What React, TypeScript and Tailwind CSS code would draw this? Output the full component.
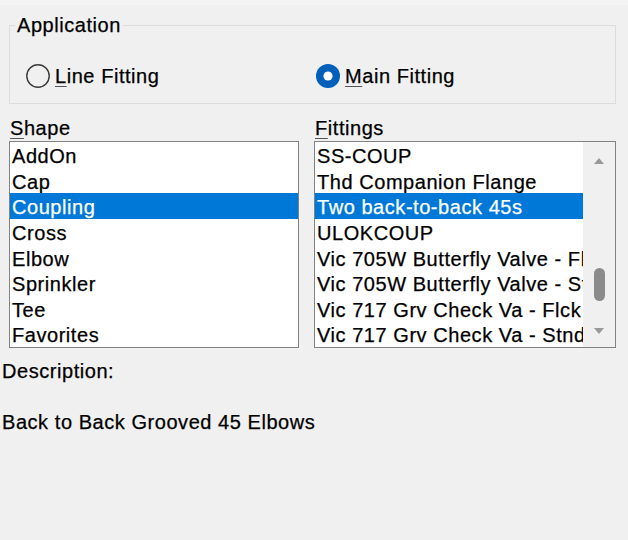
const shapes = ["AddOn", "Cap", "Coupling", "Cross", "Elbow", "Sprinkler", "Tee", "Favorites"];

const fittings = [
  "SS-COUP",
  "Thd Companion Flange",
  "Two back-to-back 45s",
  "ULOKCOUP",
  "Vic 705W Butterfly Valve - Flck",
  "Vic 705W Butterfly Valve - Stnd",
  "Vic 717 Grv Check Va - Flck",
  "Vic 717 Grv Check Va - Stnd",
];

function Radio({ checked }: { checked: boolean }) {
  return (
    <svg width="24" height="24" viewBox="0 0 24 24" className="shrink-0">
      {checked ? (
        <>
          <circle cx="12" cy="12" r="12" fill="#005fb8" />
          <circle cx="12" cy="12" r="4.6" fill="#ffffff" />
        </>
      ) : (
        <circle cx="12" cy="12" r="11.2" fill="none" stroke="#3a3a3a" strokeWidth="1.4" />
      )}
    </svg>
  );
}

function Mnemonic({ ch }: { ch: string }) {
  return <span className="underline decoration-[#555] decoration-[1px] underline-offset-[3px]">{ch}</span>;
}

function ListRow({ label, selected }: { label: string; selected: boolean }) {
  return (
    <div
      className={
        "h-[25.625px] overflow-hidden whitespace-nowrap px-[2px] pt-[2px] leading-[25.625px] " +
        (selected ? "bg-[#0078d7] text-white" : "text-black")
      }
    >
      {label}
    </div>
  );
}

function Scrollbar() {
  return (
    <div className="flex w-[32px] shrink-0 flex-col bg-[#f0f0f0]">
      <div className="flex h-[37px] items-center justify-center">
        <svg width="10" height="6" viewBox="0 0 10 6">
          <path d="M5 0 L10 6 L0 6 Z" fill="#999999" />
        </svg>
      </div>
      <div className="flex flex-1 justify-center">
        <div className="mt-[89px] h-[33px] w-[11px] rounded-full bg-[#8b8b8b]" />
      </div>
      <div className="flex h-[33px] items-center justify-center">
        <svg width="10" height="6" viewBox="0 0 10 6">
          <path d="M0 0 L10 0 L5 6 Z" fill="#999999" />
        </svg>
      </div>
    </div>
  );
}

export default function App() {
  return (
    <div className="h-[540px] w-[628px] overflow-hidden bg-[#f0f0f0] font-['Liberation_Sans',Arial,sans-serif] text-[20px] tracking-[0.55px] text-black [-webkit-text-stroke:0.25px_currentColor]">
      <div className="h-[5px] bg-[#f4f4f4]" />

      <fieldset className="ml-[9px] mt-[8px] h-[91px] w-[607px] border border-[#dcdcdc]">
        <legend className="ml-[5px] px-[2px] pt-[1px] leading-[23px]">Application</legend>
        <div className="mt-[27px] flex h-[24px] items-center pl-[16px]">
          <label className="flex w-[290px] items-center gap-[5px] leading-[24px]">
            <Radio checked={false} />
            <span>
              <Mnemonic ch="L" />
              ine Fitting
            </span>
          </label>
          <label className="flex items-center gap-[5px] leading-[24px]">
            <Radio checked />
            <span>
              <Mnemonic ch="M" />
              ain Fitting
            </span>
          </label>
        </div>
      </fieldset>

      <div className="mt-[13px] ml-[9px] flex gap-[15px]">
        <div className="w-[290px]">
          <div className="h-[23px] pl-[1px] leading-[23px]">
            <Mnemonic ch="S" />
            hape
          </div>
          <div className="mt-[1px] h-[207px] overflow-hidden border border-[#828282] bg-white">
            {shapes.map((s) => (
              <ListRow key={s} label={s} selected={s === "Coupling"} />
            ))}
          </div>
        </div>

        <div className="w-[302px]">
          <div className="h-[23px] pl-[1px] leading-[23px]">
            <Mnemonic ch="F" />
            ittings
          </div>
          <div className="mt-[1px] flex h-[207px] overflow-hidden border border-[#828282] bg-white">
            <div className="w-[268px] shrink-0 overflow-hidden">
              {fittings.map((f) => (
                <ListRow key={f} label={f} selected={f === "Two back-to-back 45s"} />
              ))}
            </div>
            <Scrollbar />
          </div>
        </div>
      </div>

      <div className="mt-[12px] pl-[2px] leading-[23px]">Description:</div>
      <div className="mt-[28px] pl-[2px] leading-[23px]">Back to Back Grooved 45 Elbows</div>
    </div>
  );
}
